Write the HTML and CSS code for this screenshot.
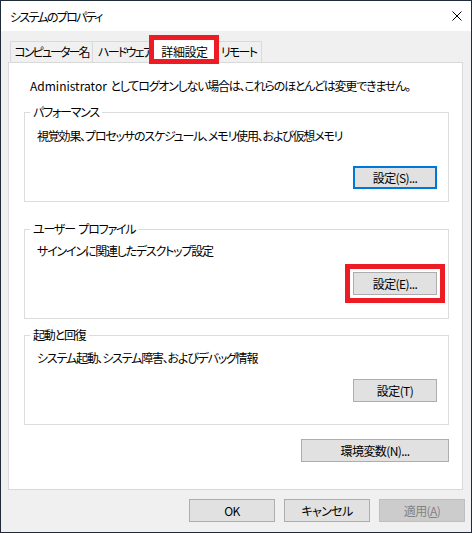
FILE: index.html
```html
<!DOCTYPE html>
<html lang="ja">
<head>
    <meta charset="UTF-8">
    <title>システムのプロパティ</title>
    <link rel="stylesheet" href="styles.css">
</head>
<body>
    <div class="window">
        <div class="titlebar">
            <span class="title">システムのプロパティ</span>
            <svg class="close" width="10" height="10" viewBox="0 0 10 10">
                <path d="M0.5 0.5 L9.5 9.5 M9.5 0.5 L0.5 9.5" stroke="#000" stroke-width="1" fill="none"/>
            </svg>
        </div>

        <div class="dialog">
            <div class="tabs">
                <div class="tab tab-name">コンピューター名</div>
                <div class="tab tab-hw">ハードウェア</div>
                <div class="tab active">詳細設定</div>
                <div class="tab tab-remote">リモート</div>
            </div>

            <div class="panel">
                <p class="intro"><span class="en">Administrator</span> としてログオンしない場合は、これらのほとんどは変更できません。</p>

                <fieldset class="group group-perf">
                    <legend>パフォーマンス</legend>
                    <p class="desc">視覚効果、プロセッサのスケジュール、メモリ使用、および仮想メモリ</p>
                    <div class="actions">
                        <button class="btn default">設定(S)...</button>
                    </div>
                </fieldset>

                <fieldset class="group group-profile">
                    <legend>ユーザー プロファイル</legend>
                    <p class="desc">サインインに関連したデスクトップ設定</p>
                    <div class="actions">
                        <button class="btn marked">設定(E)...</button>
                    </div>
                </fieldset>

                <fieldset class="group group-boot">
                    <legend>起動と回復</legend>
                    <p class="desc">システム起動、システム障害、およびデバッグ情報</p>
                    <div class="actions">
                        <button class="btn">設定(T)</button>
                    </div>
                </fieldset>

                <div class="env-row">
                    <button class="btn btn-env">環境変数(N)...</button>
                </div>
            </div>

            <div class="footer">
                <button class="btn btn-foot">OK</button>
                <button class="btn btn-foot">キャンセル</button>
                <button class="btn btn-foot" disabled>適用(<u>A</u>)</button>
            </div>
        </div>
    </div>
</body>
</html>
```

FILE: styles.css
```css
* {
    box-sizing: border-box;
    margin: 0;
    padding: 0;
}
body {
    font-family: "Noto Sans CJK JP", "Noto Sans", sans-serif;
    font-size: 12px;
    line-height: 16px;
    font-feature-settings: "palt";
    letter-spacing: -1.2px;
    word-spacing: 2px;
    color: #000;
    background: #fff;
}
.en {
    letter-spacing: 0;
}
.window {
    width: 472px;
    height: 533px;
    border: 1px solid #1f2b38;
    display: flex;
    flex-direction: column;
}
.titlebar {
    height: 30px;
    background: #fff;
    display: flex;
    align-items: center;
    justify-content: space-between;
    padding: 0 9px 0 9px;
}
.title {
    margin-top: 1px;
    letter-spacing: -1.7px;
}
.close {
    display: block;
}
.dialog {
    flex: 1;
    background: #f0f0f0;
    padding: 8px 8px 0 7px;
}
.tabs {
    display: flex;
    align-items: flex-end;
    padding-left: 2px;
    height: 23px;
}
.tab {
    height: 21px;
    padding-top: 2px;
    border: 1px solid #d9d9d9;
    border-bottom: none;
    background: #f0f0f0;
    white-space: nowrap;
    text-align: center;
    overflow: hidden;
}
.tab + .tab {
    border-left: none;
}
.tab-name {
    width: 83px;
    letter-spacing: -1.9px;
}
.tab-hw {
    width: 60px;
    text-align: left;
    padding-left: 5px;
    letter-spacing: -1.7px;
}
.tab-remote {
    width: 46px;
    letter-spacing: -1.7px;
}
.tab.active {
    position: relative;
    z-index: 1;
    overflow: visible;
    width: 67px;
    height: 24px;
    margin: 0 -2px -1px -2px;
    padding-top: 4px;
    background: #fff;
    border-left: 1px solid #d9d9d9;
    letter-spacing: -0.4px;
}
.tab.active::after {
    content: "";
    position: absolute;
    left: -3px;
    right: -2px;
    top: -5px;
    bottom: -1px;
    border: 5px solid #ed1c24;
}
.panel {
    height: 428px;
    background: #fff;
    border: 1px solid #d9d9d9;
    padding: 15px 13px 0 15px;
}
.intro {
    padding-left: 6px;
}
.group {
    border: 1px solid #dcdcdc;
    padding: 0 11px 0 12px;
    min-width: 0;
}
.group legend {
    margin-left: -7px;
    padding: 0 3px;
}
.actions {
    display: flex;
    justify-content: flex-end;
}
.group-perf {
    margin-top: 10px;
    height: 98px;
}
.group-perf .desc {
    margin-top: 8px;
}
.group-perf .actions {
    margin-top: 22px;
}
.group-profile {
    margin-top: 19px;
    height: 98px;
}
.group-profile .desc {
    margin-top: 6px;
}
.group-profile .actions {
    margin-top: 13px;
}
.group-boot {
    margin-top: 8px;
    height: 98px;
}
.group-boot .desc {
    margin-top: 7px;
}
.group-boot .actions {
    margin-top: 13px;
}
.btn {
    font: inherit;
    letter-spacing: -0.6px;
    color: #000;
    width: 84px;
    height: 23px;
    background: #e1e1e1;
    border: 1px solid #adadad;
    border-radius: 0;
}
.btn.default {
    border: 2px solid #0078d7;
}
.btn.marked {
    outline: 5px solid #ed1c24;
    outline-offset: 3px;
}
.env-row {
    display: flex;
    justify-content: flex-end;
    margin-top: 14px;
}
.btn-env {
    width: 148px;
}
.footer {
    display: flex;
    justify-content: flex-end;
    gap: 8px;
    margin: 9px -2px 0 0;
}
.btn-foot {
    width: 86px;
}
.btn-foot + .btn-foot {
    margin-left: 1px;
}
.btn:disabled {
    background: #cccccc;
    border-color: #bfbfbf;
    color: #838383;
}
.btn u {
    text-decoration: underline;
}
```
